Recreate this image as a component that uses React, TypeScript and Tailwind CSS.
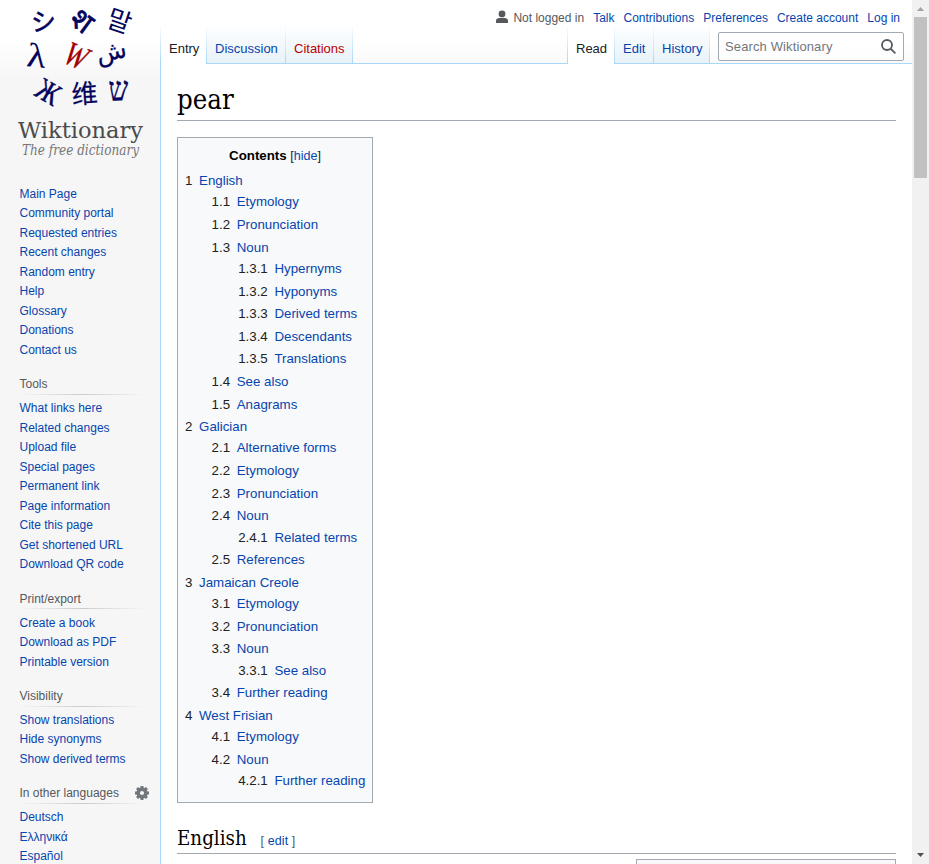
import React from 'react';

type Toc = { n: string; t: string; c?: Toc[] };

const toc: Toc[] = [
  { n: '1', t: 'English', c: [
    { n: '1.1', t: 'Etymology' },
    { n: '1.2', t: 'Pronunciation' },
    { n: '1.3', t: 'Noun', c: [
      { n: '1.3.1', t: 'Hypernyms' },
      { n: '1.3.2', t: 'Hyponyms' },
      { n: '1.3.3', t: 'Derived terms' },
      { n: '1.3.4', t: 'Descendants' },
      { n: '1.3.5', t: 'Translations' },
    ] },
    { n: '1.4', t: 'See also' },
    { n: '1.5', t: 'Anagrams' },
  ] },
  { n: '2', t: 'Galician', c: [
    { n: '2.1', t: 'Alternative forms' },
    { n: '2.2', t: 'Etymology' },
    { n: '2.3', t: 'Pronunciation' },
    { n: '2.4', t: 'Noun', c: [{ n: '2.4.1', t: 'Related terms' }] },
    { n: '2.5', t: 'References' },
  ] },
  { n: '3', t: 'Jamaican Creole', c: [
    { n: '3.1', t: 'Etymology' },
    { n: '3.2', t: 'Pronunciation' },
    { n: '3.3', t: 'Noun', c: [{ n: '3.3.1', t: 'See also' }] },
    { n: '3.4', t: 'Further reading' },
  ] },
  { n: '4', t: 'West Frisian', c: [
    { n: '4.1', t: 'Etymology' },
    { n: '4.2', t: 'Noun', c: [{ n: '4.2.1', t: 'Further reading' }] },
  ] },
];

const groups = [
  { title: 'Tools', items: ['What links here', 'Related changes', 'Upload file', 'Special pages', 'Permanent link', 'Page information', 'Cite this page', 'Get shortened URL', 'Download QR code'] },
  { title: 'Print/export', items: ['Create a book', 'Download as PDF', 'Printable version'] },
  { title: 'Visibility', items: ['Show translations', 'Hide synonyms', 'Show derived terms'] },
  { title: 'In other languages', items: ['Deutsch', 'Ελληνικά', 'Español'], gear: true },
];

const mainLinks = ['Main Page', 'Community portal', 'Requested entries', 'Recent changes', 'Random entry', 'Help', 'Glossary', 'Donations', 'Contact us'];

function TocList({ items, nested }: { items: Toc[]; nested?: boolean }) {
  return (
    <ul className={nested ? 'pl-[26.6px]' : ''}>
      {items.map((i) => (
        <li key={i.n} className="mb-[1.33px]">
          <a className="block whitespace-nowrap leading-[21.28px] text-[#0645ad]">
            <span className="mr-[6.65px] text-[#202122]">{i.n}</span>
            {i.t}
          </a>
          {i.c && <TocList items={i.c} nested />}
        </li>
      ))}
    </ul>
  );
}

function Links({ items }: { items: string[] }) {
  return (
    <ul>
      {items.map((t) => (
        <li key={t} className="h-[19.5px] py-[3px] leading-[13.5px] text-[#0645ad]">{t}</li>
      ))}
    </ul>
  );
}

function Logo() {
  return (
    <svg width="160" height="160" viewBox="0 0 160 160" className="block overflow-visible">
      <g fill="#04045c" stroke="#04045c" textAnchor="middle">
        <text transform="translate(43.500 21.500) rotate(-3)" y="9" fontSize="25" strokeWidth="0.5" fontFamily="'Noto Sans CJK JP', sans-serif">シ</text>
        <text transform="translate(82 21) rotate(36)" y="10" fontSize="30" strokeWidth="0.7" fontFamily="'Noto Sans', sans-serif">श</text>
        <text transform="translate(119.500 20.500) rotate(19)" y="10" fontSize="26" strokeWidth="0" fontFamily="'Noto Sans CJK KR', sans-serif">말</text>
        <text transform="translate(36.500 56) rotate(6) scale(1.15 1)" y="11" fontSize="34" strokeWidth="0.1" fontFamily="'Liberation Serif', serif">λ</text>
        <text transform="translate(112 55.500) rotate(-12)" y="4.500" fontSize="25" strokeWidth="0.2" fontFamily="'DejaVu Sans', sans-serif">ش</text>
        <text transform="translate(48 92) rotate(30) scale(.82 1)" y="10" fontSize="31" strokeWidth="0.5" fontFamily="'Liberation Serif', serif">Ж</text>
        <text transform="translate(84.500 94) rotate(-4)" y="9" fontSize="26" strokeWidth="0.2" fontFamily="'Noto Sans CJK SC', sans-serif">维</text>
        <text transform="translate(118.500 90) rotate(-3) scale(.82 1)" y="10.500" fontSize="34" strokeWidth="0.3" fontFamily="'Liberation Serif', serif">ש</text>
      </g>
      <text transform="translate(76 56) rotate(24) scale(.78 1)" y="11" textAnchor="middle" fontSize="34" fontStyle="italic" fill="#a00000" stroke="#a00000" strokeWidth="0.4" fontFamily="'Liberation Serif', serif">W</text>
      <text x="18" y="137.5" fontSize="23" fill="#4b4b4b" textLength="125" lengthAdjust="spacingAndGlyphs" fontFamily="'DejaVu Serif', serif">Wiktionary</text>
      <text x="22" y="155" fontSize="15.5" fontStyle="italic" fill="#777" textLength="117" lengthAdjust="spacingAndGlyphs" fontFamily="'DejaVu Serif', serif">The free dictionary</text>
    </svg>
  );
}

function Gear() {
  return (
    <svg width="14" height="14" viewBox="0 0 20 20" fill="#72777d">
      <g transform="translate(10 10)">
        <path id="tooth" d="M2-10h-4l-1 6.500h6m0 7h-6l1 6.500h4" />
        <use href="#tooth" transform="rotate(45)" />
        <use href="#tooth" transform="rotate(90)" />
        <use href="#tooth" transform="rotate(135)" />
      </g>
      <path d="M10 2.200a7.800 7.800 0 000 15.600 7.800 7.800 0 000-15.600v4.800a3 3 0 010 6 3 3 0 010-6" />
    </svg>
  );
}

const tabLine = 'w-px bg-linear-to-b from-white to-[#a7d7f9]';

function Tab({ label, width, active, color }: { label: string; width: string; active?: boolean; color?: string }) {
  return (
    <>
      <div className={`${width} pl-2 pt-[16px] text-[13px] leading-[18px] whitespace-nowrap ${active ? 'h-10 bg-white text-[#202122]' : 'h-[39px] bg-linear-to-b from-white to-[#e8f2f8]'} ${color ?? ''}`}>
        {label}
      </div>
      <div className={`${tabLine} ${active ? 'h-10' : 'h-[39px]'}`} />
    </>
  );
}

export default function App() {
  return (
    <div className="flex h-[864px] w-[929px] overflow-hidden bg-[#f6f6f6] font-['Liberation_Sans',Arial,sans-serif]">
      <aside className="w-40 shrink-0 bg-[linear-gradient(#fff_0px,#fff_40px,#f6f6f6_80px)] text-[12px]">
        <Logo />
        <nav className="pl-[19.5px] pt-[24.8px]">
          <Links items={mainLinks} />
          {groups.map((g) => (
            <section key={g.title} className="pt-[15px]">
              <div className="flex h-[18.5px] w-[129.5px] items-start justify-between">
                <h3 className="pt-[2px] leading-[14px] text-[#54595d]">{g.title}</h3>
                {g.gear && <span className="pt-[2px]"><Gear /></span>}
              </div>
              <div className="mb-[4.400px] h-px w-[125px] bg-linear-to-r from-transparent via-[#c8ccd1] to-transparent" />
              <Links items={g.items} />
            </section>
          ))}
        </nav>
      </aside>

      <main className="flex w-[752px] shrink-0 flex-col">
        <header className="flex h-16 flex-col bg-[linear-gradient(#fff_0px,#fff_40px,#f6f6f6_80px)]">
          <div className="flex h-6 justify-end pr-[12px] pt-[11px] text-[12px] leading-[15px] text-[#0645ad]">
            <svg width="14" height="14" viewBox="0 0 14 14" fill="#54595d" className="-mt-px mr-1 shrink-0">
              <circle cx="7" cy="3.900" r="3.400" />
              <path d="M1 13v-2.200C1 9 2.500 8 4.200 8h5.600C11.500 8 13 9 13 10.800V13z" />
            </svg>
            <div className="flex gap-[9px] whitespace-nowrap">
              <span className="text-[#54595d]">Not logged in</span>
              <span>Talk</span><span>Contributions</span><span>Preferences</span><span>Create account</span><span>Log in</span>
            </div>
          </div>
          <div className="flex h-10 items-start bg-[linear-gradient(#a7d7f9,#a7d7f9)] bg-[length:100%_1px] bg-bottom bg-no-repeat">
            <div className={`${tabLine} h-10`} />
            <Tab label="Entry" width="w-[45px]" active />
            <Tab label="Discussion" width="w-[78px]" color="text-[#0645ad]" />
            <Tab label="Citations" width="w-[66px]" color="text-[#ba0000]" />
            <div className="flex-1" />
            <div className={`${tabLine} h-10`} />
            <Tab label="Read" width="w-[46px]" active />
            <Tab label="Edit" width="w-[38px]" color="text-[#0645ad]" />
            <Tab label="History" width="w-[55px]" color="text-[#0645ad]" />
            <div className="ml-2 mr-2 mt-2 flex h-[29px] w-[186px] items-center justify-between rounded-[2px] border border-[#a2a9b1] bg-white/50 pl-[6px] pr-[7px] text-[13px] tracking-[0.12px] text-[#72777d]">
              <span>Search Wiktionary</span>
              <svg width="15" height="15" viewBox="0 0 15 15" fill="none" stroke="#54595d" strokeWidth="1.8" className="-mt-px">
                <circle cx="6" cy="6" r="5" /><path d="M9.600 9.600l4.800 4.800" />
              </svg>
            </div>
          </div>
        </header>

        <article className="flex-1 border-l border-[#a7d7f9] bg-white pl-4 pr-4 pt-[17px]">
          <div className="h-10 border-b border-[#a2a9b1]">
            <h1 className="w-fit origin-left scale-x-[0.91] font-['DejaVu_Serif',serif] text-[27px] leading-[38px] text-black">pear</h1>
          </div>
          <div className="mt-4 h-[666px] w-[196px] border border-[#a2a9b1] bg-[#f8f9fa] pl-[7px] pt-[7px] text-[13.3px] text-[#202122]">
            <div className="mb-[2.850px] pr-[7px] text-center leading-[21.300px]">
              <b className="text-black">Contents</b> <span className="text-[12.5px]">[<a className="text-[#0645ad]">hide</a>]</span>
            </div>
            <TocList items={toc} />
          </div>
          <div className="mt-[19px] flex h-8 items-baseline border-b border-[#a2a9b1] leading-[32px]">
            <h2 className="w-[70px] origin-left scale-x-[0.915] font-['DejaVu_Serif',serif] text-[20px] text-black">English</h2>
            <span className="ml-[13.5px] text-[12.5px] tracking-[0.1px] text-[#54595d]">[ <a className="text-[#0645ad]">edit</a> ]</span>
          </div>
          <div className="ml-auto mt-[5px] h-8 w-[260px] border border-[#a2a9b1] bg-[#f9f9f9]" />
        </article>
      </main>

      <div className="flex w-[17px] shrink-0 flex-col items-center justify-between bg-[#f1f1f1]">
        <div className="flex flex-col items-center">
          <svg width="17" height="17" viewBox="0 0 17 17" fill="#a3a3a3"><path d="M5 11h7L8.500 7z" /></svg>
          <div className="h-[161px] w-[13px] bg-[#c1c1c1]" />
        </div>
        <svg width="17" height="17" viewBox="0 0 17 17" fill="#505050"><path d="M5 6h7L8.500 10z" /></svg>
      </div>
    </div>
  );
}
